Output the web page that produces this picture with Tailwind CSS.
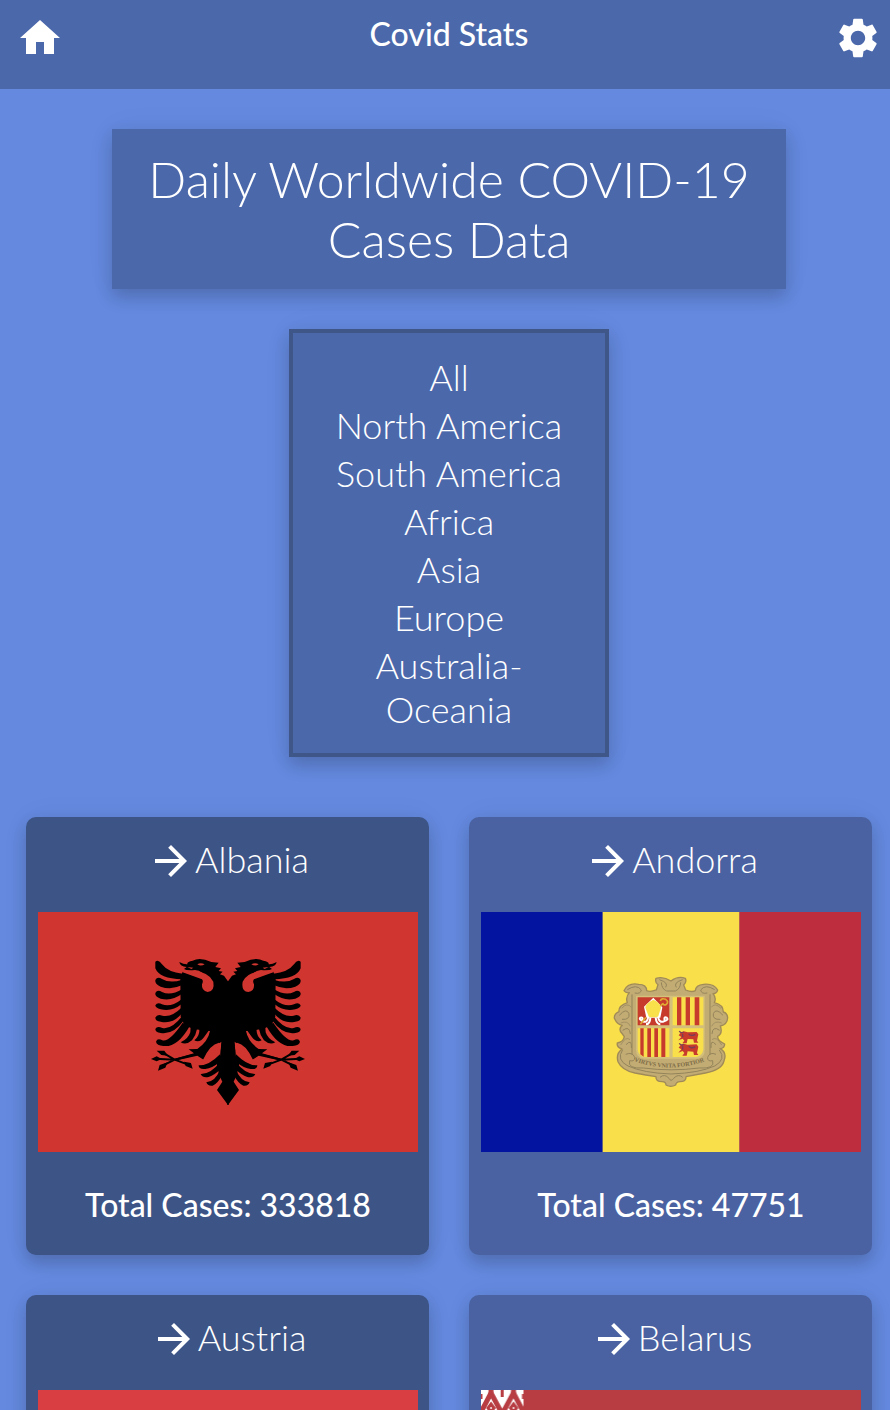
<!DOCTYPE html>
<html lang="en">
<head>
<meta charset="utf-8">
<meta name="viewport" content="width=device-width, initial-scale=1">
<title>Covid Stats</title>
<script src="https://cdn.jsdelivr.net/npm/@tailwindcss/browser@4"></script>
</head>
<body class="h-screen overflow-y-auto [scrollbar-width:none] bg-[#6489de] font-['Lato',sans-serif] text-white">
<svg class="hidden" aria-hidden="true">
  <symbol id="arrow" viewBox="0 0 24 24"><path fill="currentColor" d="m12 4-1.41 1.41L16.17 11H4v2h12.17l-5.58 5.59L12 20l8-8z"/></symbol>
</svg>

<header class="flex h-[89px] items-start justify-between bg-[#4b68ab] pt-[14px] pr-2 pl-4">
  <a href="#" aria-label="Home">
    <svg class="size-12" viewBox="0 0 24 24" fill="currentColor"><path d="M10 20v-6h4v6h5v-8h3L12 3 2 12h3v8z"/></svg>
  </a>
  <h1 class="text-[32px] leading-[40px] font-medium">Covid Stats</h1>
  <button type="button" aria-label="Settings">
    <svg class="size-12" viewBox="0 0 24 24" fill="currentColor"><path d="M19.14 12.94c.04-.3.06-.61.06-.94 0-.32-.02-.64-.07-.94l2.03-1.58c.18-.14.23-.41.12-.61l-1.92-3.32c-.12-.22-.37-.29-.59-.22l-2.39.96c-.5-.38-1.03-.7-1.62-.94l-.36-2.54c-.04-.24-.24-.41-.48-.41h-3.84c-.24 0-.43.17-.47.41l-.36 2.54c-.59.24-1.13.57-1.62.94l-2.39-.96c-.22-.08-.47 0-.59.22L2.74 8.87c-.12.21-.08.47.12.61l2.03 1.58c-.05.3-.09.63-.09.94s.02.64.07.94l-2.03 1.58c-.18.14-.23.41-.12.61l1.92 3.32c.12.22.37.29.59.22l2.39-.96c.5.38 1.03.7 1.62.94l.36 2.54c.05.24.24.41.48.41h3.84c.24 0 .44-.17.47-.41l.36-2.54c.59-.24 1.13-.56 1.62-.94l2.39.96c.22.08.47 0 .59-.22l1.92-3.32c.12-.22.07-.47-.12-.61zM12 15.6c-1.98 0-3.6-1.62-3.6-3.6s1.62-3.6 3.6-3.6 3.6 1.62 3.6 3.6-1.62 3.6-3.6 3.6"/></svg>
  </button>
</header>

<main class="flex flex-col items-center pt-10 pr-[18px] pb-10 pl-[26px]">
  <h2 class="w-[674px] max-w-full bg-[#4b68ab] px-8 py-5 text-center text-[50px] leading-[60px] font-light shadow-[0_8px_16px_rgba(0,0,0,0.18),0_0_32px_rgba(0,0,0,0.04)]">Daily Worldwide COVID-19 Cases Data</h2>

  <ul class="mt-10 flex w-80 flex-col gap-1 border-4 border-[#3f5689] bg-[#4b68ab] px-10 py-[22px] text-center text-[36px] leading-[44px] font-light shadow-[0_8px_16px_rgba(0,0,0,0.18),0_0_32px_rgba(0,0,0,0.04)]">
    <li><button type="button">All</button></li>
    <li><button type="button" class="whitespace-nowrap">North America</button></li>
    <li><button type="button" class="whitespace-nowrap">South America</button></li>
    <li><button type="button">Africa</button></li>
    <li><button type="button">Asia</button></li>
    <li><button type="button">Europe</button></li>
    <li><button type="button">Australia-<wbr>Oceania</button></li>
  </ul>

  <section class="mt-[60px] grid w-full grid-cols-2 gap-10" aria-label="Countries">
    <article class="rounded-[10px] bg-[#3d5486] pt-5 pr-[11px] pb-[30px] pl-3 shadow-[0_8px_16px_rgba(0,0,0,0.18),0_0_32px_rgba(0,0,0,0.04)]">
      <h3><a href="#" class="flex items-center justify-center text-[36px] leading-[44px] font-light"><svg class="size-12"><use href="#arrow"/></svg><span class="pb-1">Albania</span></a></h3>
      <svg class="mt-[27px] w-full" viewBox="0 0 380 240" preserveAspectRatio="none" role="img" aria-label="Flag of Albania">
        <rect width="380" height="240" fill="#d0362f"/>
        <g transform="translate(102 33) scale(.3333)">
          <g id="eagle">
            <path d="M266 112 L252 92 L240 88 L248 80 L236 78 L243 70 L226 66 L236 53 L214 51 Q180 35 158 47 Q140 50 142 58 Q132 59 118 51 Q120 64 140 66 L132 72 Q140 78 165 75 Q194 78 192 102 L128 80 L121 98 L122 215 L132 238 Q150 255 210 258 Q204 290 172 312 L146 313 L162 325 L104 341 L105 347 L172 332 L192 345 Q222 330 232 300 L244 290 L240 335 L230 355 L234 375 L240 395 L247 410 L231 435 L264 480 L266 480 Z"/>
            <g>
              <path d="M46 50 Q56 42 66 58 Q84 82 128 86 L126 103 Q58 101 46 70Z"/>
              <path d="M46 105 Q52 94 66 102 Q90 116 127 104 L125 121 Q94 136 62 125 Q44 118 46 105Z"/>
              <path d="M46 144 Q52 132 66 141 Q92 154 127 132 L124 148 Q96 169 62 161 Q44 155 46 144Z"/>
              <path d="M46 181 Q52 171 66 178 Q92 189 127 161 L124 178 Q96 201 62 193 Q46 189 46 181Z"/>
              <path d="M46 218 Q51 206 67 212 Q94 219 126 187 L124 207 Q98 238 62 230 Q46 228 46 218Z"/>
              <path d="M46 252 Q51 242 67 249 Q94 255 127 213 L130 228 Q100 270 62 264 Q46 262 46 252Z"/>
              <path d="M48 290 Q52 278 67 286 Q88 292 128 233 L148 245 Q112 308 70 303 Q50 301 48 290Z"/>
              <path d="M152 245 L151 262 Q144 283 122 292 Q138 302 156 286 Q168 271 171 252Z"/>
              <path d="M178 252 Q180 272 163 286 Q179 295 193 275 L208 254Z"/>
            </g>
            <path d="M240 328 Q206 363 176 361 Q176 374 196 372 Q216 370 240 350Z M240 352 Q212 388 182 387 Q188 400 206 396 Q224 390 242 372Z M240 374 Q226 409 199 412 Q203 424 218 422 Q232 418 248 388Z"/>
            <path fill="none" stroke="#000" stroke-width="6" d="M163 329 L104 344 L46 341 M104 344 L68 323 M104 344 L68 362 M104 344 L150 361"/>
            <path d="M33 342 L50 334 L65 342 L50 349Z M50 317 L73 317 L84 332 L64 330Z M54 377 L59 360 L83 352 L76 368Z M132 350 L153 354 L158 371 L137 363Z"/>
            <g fill="#d0362f">
              <path d="M128 76 L165 79 Q207 82 220 110 Q225 139 203 141 Q184 138 186 118 Q191 108 186 103 L128 82Z"/>
              <path d="M237 293 Q248 296 240 316 Q224 342 202 354 Q178 362 172 355 Q184 353 190 343 Q210 298 237 293Z"/>
              <path d="M172 58 Q182 51 194 58 Q182 65 172 58Z M142 66 L160 68 L154 72Z"/>
            </g>
          </g>
          <use href="#eagle" transform="translate(528) scale(-1 1)"/>
        </g>
      </svg>
      <p class="mt-8 text-center text-[32px] leading-[41px] font-medium">Total Cases: 333818</p>
    </article>

    <article class="rounded-[10px] bg-[#4a62a1] pt-5 pr-[11px] pb-[30px] pl-3 shadow-[0_8px_16px_rgba(0,0,0,0.18),0_0_32px_rgba(0,0,0,0.04)]">
      <h3><a href="#" class="flex items-center justify-center text-[36px] leading-[44px] font-light"><svg class="size-12"><use href="#arrow"/></svg><span class="pb-1">Andorra</span></a></h3>
      <svg class="mt-[27px] w-full" viewBox="0 0 380 240" preserveAspectRatio="none" role="img" aria-label="Flag of Andorra">
        <rect width="122" height="240" fill="#0315a0"/>
        <rect x="121.6" width="137" height="240" fill="#f9df4a"/>
        <rect x="258.4" width="121.6" height="240" fill="#be2d3e"/>
        <g transform="translate(119 53) scale(.3333)">
          <path fill="#c2ac74" stroke="#a08b58" stroke-width="4" stroke-linejoin="round" d="M213 48 Q190 33 168 40 Q164 52 174 59 L169 75 Q150 82 140 77 Q140 58 116 58 Q84 52 72 77 Q78 85 88 83 Q76 96 82 113 Q55 122 57 140 Q42 146 43 160 Q52 180 67 181 Q54 192 65 204 L73 215 Q70 231 52 234 Q49 246 66 252 Q47 266 54 290 Q66 316 105 324 Q138 330 168 335 Q167 350 186 350 Q198 350 198 360 Q212 368 227 360 Q229 350 240 350 Q259 350 258 335 L316 324 Q365 315 372 288 Q382 262 360 251 Q374 250 374 237 Q352 226 353 214 Q369 205 361 183 Q382 178 383 158 Q382 144 370 141 Q370 119 343 113 Q350 99 339 86 Q350 86 353 75 Q341 55 311 58 Q287 60 286 77 Q276 83 257 75 L251 60 Q261 51 256 40 Q234 32 213 48Z"/>
          <g fill="none" stroke="#94845a" stroke-width="3">
            <path d="M184 52 Q185 72 200 78 H226 Q241 72 242 52 M178 44 Q207 53 197 67 M248 44 Q219 53 229 67 M82 74 Q110 56 124 75 Q122 88 104 84 M344 74 Q316 56 302 75 Q304 88 322 84 M96 88 V270 M330 88 V270 M58 151 Q79 127 87 146 Q90 165 66 163 M369 151 Q348 127 340 146 Q337 165 361 163 M68 196 Q89 181 91 207 M359 196 Q338 181 336 207 M78 239 Q96 220 94 249 M348 239 Q331 220 333 249"/>
            <path d="M77 268 Q98 260 104 277 Q105 291 89 287 Q81 312 130 309 Q213 320 298 309 Q346 312 338 287 Q322 291 323 277 Q329 260 348 268 M68 254 Q48 285 84 303 Q130 324 213 327 Q298 324 344 303 Q380 283 358 255 M180 337 Q194 325 207 340 Q213 352 221 340 Q235 325 248 337"/>
            <path d="M65 130 Q82 111 94 127 M363 130 Q344 111 334 127 M62 174 Q83 165 91 184 M365 174 Q344 165 335 184 M62 240 Q78 212 90 224 M365 240 Q349 212 336 224" stroke-width="2"/>
          </g>
          <path fill="#d4c07a" d="M108 92H314V255Q314 279 290 281H132Q109 279 108 255Z"/>
          <path fill="#c73b2d" d="M113 97H208V181H113Z"/>
          <path fill="#f9df4a" d="M218 97H310V181H218Z M113 190H208V276H133Q114 272 113 253Z M218 190H310V253Q308 273 289 276H218Z"/>
          <path fill="#c73b2d" d="M231 97h13v84h-13z M257 97h13v84h-13z M284 97h14v84h-14z M121 190h10v85l-10-7z M142 190h11v86h-11z M163 190h11v86h-11z M184 190h12v86h-12z"/>
          <path fill="#fff" d="M160 98 L187 127 L181 158 H139 L132 125Z"/>
          <path fill="#f8e14b" d="M160 104 Q137 115 136 128 L147 157 H174 L183 128 Q179 111 160 104Z"/>
          <path fill="none" stroke="#fff" stroke-width="6" d="M145 155 Q142 175 129 169 Q116 163 121 158 Q130 155 127 166 M174 155 Q177 175 192 169 Q207 165 200 158 Q191 154 194 166 M151 158 Q150 178 138 178 M167 158 Q169 178 181 178"/>
          <path fill="none" stroke="#dfaa31" stroke-width="5" d="M121 178 L138 157 M181 108 Q184 98 197 103 Q208 110 198 119 Q190 122 188 114 M181 124 L187 117"/>
          <g id="cow">
            <path fill="#c73b2d" d="M242 203 L251 199 L263 202 L290 201 L295 208 L291 227 L295 233 H282 L280 223 L263 222 L260 235 H247 L253 227 L248 221 L235 226 L244 216 L236 211Z"/>
            <path fill="none" stroke="#7a3e55" stroke-width="4" d="M238 198 Q242 206 251 201 M248 207 V217 M266 207 Q274 215 286 208"/>
          </g>
          <use href="#cow" y="37"/>
        </g>
        <path id="motto" d="M153 149 Q190 163 230 147" fill="none"/>
        <text font-family="Liberation Serif" font-size="6" font-weight="bold" fill="#7c6a45"><textPath href="#motto">VIRTVS VNITA FORTIOR</textPath></text>
      </svg>
      <p class="mt-8 text-center text-[32px] leading-[41px] font-medium">Total Cases: 47751</p>
    </article>

    <article class="rounded-[10px] bg-[#3d5486] pt-5 pr-[11px] pb-[30px] pl-3 shadow-[0_8px_16px_rgba(0,0,0,0.18),0_0_32px_rgba(0,0,0,0.04)]">
      <h3><a href="#" class="flex items-center justify-center text-[36px] leading-[44px] font-light"><svg class="size-12"><use href="#arrow"/></svg><span class="pb-1">Austria</span></a></h3>
      <svg class="mt-[27px] w-full" viewBox="0 0 380 240" preserveAspectRatio="none" role="img" aria-label="Flag of Austria">
        <rect width="380" height="240" fill="#d93f42"/>
        <rect y="80" width="380" height="80" fill="#fff"/>
      </svg>
    </article>

    <article class="rounded-[10px] bg-[#4a62a1] pt-5 pr-[11px] pb-[30px] pl-3 shadow-[0_8px_16px_rgba(0,0,0,0.18),0_0_32px_rgba(0,0,0,0.04)]">
      <h3><a href="#" class="flex items-center justify-center text-[36px] leading-[44px] font-light"><svg class="size-12"><use href="#arrow"/></svg><span class="pb-1">Belarus</span></a></h3>
      <svg class="mt-[27px] w-full" viewBox="0 0 380 240" preserveAspectRatio="none" role="img" aria-label="Flag of Belarus">
        <defs>
          <pattern id="ornament" width="42.5" height="40" patternUnits="userSpaceOnUse">
            <rect width="42.5" height="40" fill="#fff"/>
            <g fill="none" stroke="#b73d43">
              <path d="M0 22 L10 3 L21.2 24 L32.5 3 L42.5 22" stroke-width="5"/>
              <path d="M10 -1 V8 M32.5 -1 V8" stroke-width="5"/>
              <path d="M21.2 0 V7 M0 4 V9 M42.5 4 V9" stroke-width="3"/>
              <path d="M10 14 L13 18 L10 22 L7 18Z M32.5 14 L35.5 18 L32.5 22 L29.5 18Z" stroke-width="3"/>
            </g>
          </pattern>
        </defs>
        <rect width="380" height="160" fill="#b73d43"/>
        <rect y="160" width="380" height="80" fill="#4a8a45"/>
        <rect width="42.5" height="240" fill="url(#ornament)"/>
      </svg>
    </article>
  </section>
</main>
</body>
</html>
